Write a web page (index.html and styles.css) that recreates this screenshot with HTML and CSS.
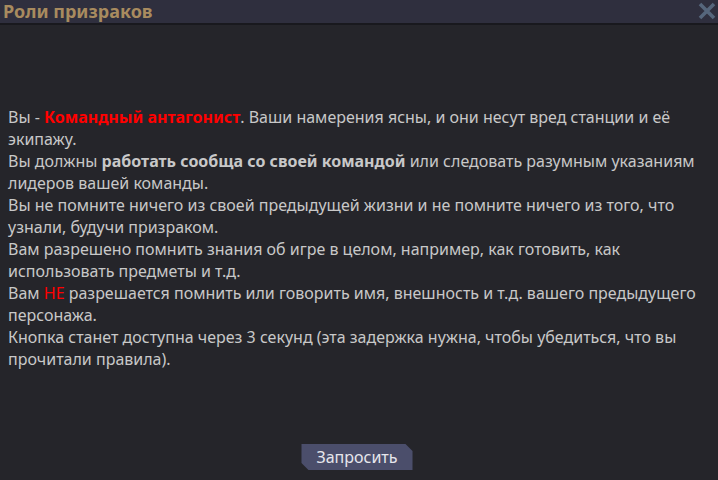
FILE: index.html
```html
<!DOCTYPE html>
<html>
<head>
<meta charset="utf-8">
<link rel="stylesheet" href="styles.css">
</head>
<body>
<div class="window">
  <div class="titlebar">
    <span class="title">Роли призраков</span>
    <svg class="close" width="20" height="20" viewBox="0 0 20 20"><path d="M3 3 L17 17 M17 3 L3 17" stroke="#56667c" stroke-width="3.6" stroke-linecap="butt"/></svg>
  </div>
  <div class="content">
    <div class="text">
      <p>Вы - <b class="red">Командный антагонист</b>. Ваши намерения ясны, и они несут вред станции и её экипажу.</p>
      <p>Вы должны <b>работать сообща со своей командой</b> или следовать разумным указаниям лидеров вашей команды.</p>
      <p>Вы не помните ничего из своей предыдущей жизни и не помните ничего из того, что узнали, будучи призраком.</p>
      <p>Вам разрешено помнить знания об игре в целом, например, как готовить, как использовать предметы и т.д.</p>
      <p>Вам <span class="red">НЕ</span> разрешается помнить или говорить имя, внешность и т.д. вашего предыдущего персонажа.</p>
      <p>Кнопка станет доступна через 3 секунд (эта задержка нужна, чтобы убедиться, что вы прочитали правила).</p>
    </div>
    <div class="actions">
      <button class="btn">Запросить</button>
    </div>
  </div>
</div>
</body>
</html>
```
FILE: styles.css
```css
html, body {
  margin: 0;
  padding: 0;
  background: #25252a;
}
body {
  width: 718px;
  height: 480px;
  overflow: hidden;
  font-family: "Noto Sans", "Open Sans", sans-serif;
}
.window {
  display: flex;
  flex-direction: column;
  height: 480px;
}
.titlebar {
  height: 23px;
  background: #2f2f3e;
  border-bottom: 2px solid #19191e;
  display: flex;
  align-items: center;
  justify-content: space-between;
  padding-left: 3px;
  padding-right: 1px;
  box-sizing: content-box;
}
.title {
  color: #a88b5f;
  font-weight: bold;
  font-size: 18px;
  line-height: 23px;
  margin-top: -1px;
}
.close {
  display: block;
  margin-top: -1px;
}
.content {
  flex: 1;
  display: flex;
  flex-direction: column;
  padding: 81px 8px 10px 8px;
}
.text {
  color: #c8c8c8;
  font-size: 16px;
  line-height: 22px;
}
.text p {
  margin: 0;
}
.text b {
  font-weight: bold;
}
.red {
  color: #ff0000;
}
.actions {
  margin-top: auto;
  display: flex;
  justify-content: center;
  padding-right: 4px;
}
.btn {
  font-family: "Noto Sans", "Open Sans", sans-serif;
  font-size: 16px;
  color: #e6e6ec;
  background: #4b4e6b;
  border: none;
  height: 26px;
  padding: 0 15px;
  clip-path: polygon(0 0, calc(100% - 7px) 0, 100% 7px, 100% 100%, 7px 100%, 0 calc(100% - 7px));
  line-height: 26px;
}
```
